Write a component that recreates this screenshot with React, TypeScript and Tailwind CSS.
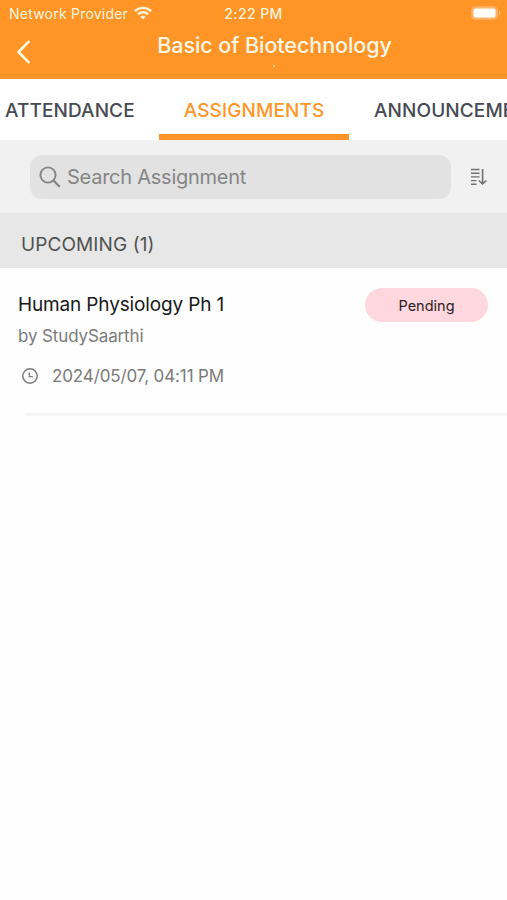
interface Assignment {
  id: number;
  title: string;
  author: string;
  dueDate: string;
  status: string;
}

const assignments: Assignment[] = [
  {
    id: 1,
    title: 'Human Physiology Ph 1',
    author: 'StudySaarthi',
    dueDate: '2024/05/07, 04:11 PM',
    status: 'Pending',
  },
];

const StatusBar = () => (
  <div className="grid h-7 grid-cols-3 items-center pb-[2px] text-[14px] text-[#fff3dc]">
    <div className="flex items-center gap-[6px] pl-[9px]">
      <span className="whitespace-nowrap tracking-[0.22px]">Network Provider</span>
      <svg className="h-[14px] w-[18px] shrink-0" viewBox="0 0 18 14" fill="none" stroke="currentColor" strokeWidth="2.4">
        <path d="M0.9 5.2C5.4 0.8 12.6 0.8 17.1 5.2" />
        <path d="M3.9 8.3C6.8 5.6 11.2 5.6 14.1 8.3" />
        <path d="M9 13.6L6.2 10.8C7.8 9.4 10.2 9.4 11.8 10.8Z" fill="currentColor" stroke="none" />
      </svg>
    </div>
    <span className="text-center font-medium tracking-[0.4px]">2:22 PM</span>
    <div className="flex justify-end pr-[6px]">
      <svg className="h-[14px] w-[30px]" viewBox="0 0 30 14">
        <rect x="0.5" y="0.5" width="26" height="13" rx="4" fill="#ffb366" stroke="#ffae5c" />
        <rect x="2.5" y="2.5" width="22" height="9" rx="2" fill="#fffefa" />
        <path d="M28 4.5C29.8 5.5 29.8 8.5 28 9.5Z" fill="#ffc283" />
      </svg>
    </div>
  </div>
);

const Header = () => (
  <header className="h-[79px] bg-[#ff9527]">
    <StatusBar />
    <div className="flex h-[51px]">
      <button className="flex w-10 shrink-0 justify-center pt-3 pl-2 text-[#fff6e6]" aria-label="Go back">
        <svg className="h-6 w-4" viewBox="0 0 16 24" fill="none" stroke="currentColor" strokeWidth="2.6" strokeLinecap="round" strokeLinejoin="round">
          <path d="M12.5 1.8L2.5 12L12.5 22.2" />
        </svg>
      </button>
      <div className="flex flex-1 flex-col items-center pt-1 pl-[2px] text-[#fff6e6]">
        <h1 className="text-[21.5px] leading-[26px] font-medium tracking-[-0.06px] whitespace-nowrap">Basic of Biotechnology</h1>
        <span className="mt-[7px] ml-[-2px] size-[2px] rounded-full bg-[#ffe6c4]" />
      </div>
    </div>
  </header>
);

const Tabs = () => (
  <nav className="flex h-[61px] overflow-hidden bg-white text-[19px] font-medium tracking-[0.1px] whitespace-nowrap text-[#464a52]">
    <button className="flex w-[159px] shrink-0 items-start pt-[18px] pl-[5px] leading-[28px]">ATTENDANCE</button>
    <button className="flex w-[190px] shrink-0 items-start justify-center border-b-6 border-[#ff9527] pt-[18px] leading-[28px] text-[#ff9527]">
      ASSIGNMENTS
    </button>
    <button className="flex shrink-0 items-start pt-[18px] pl-[25px] leading-[28px]">ANNOUNCEMENTS</button>
  </nav>
);

const SearchBar = () => (
  <div className="flex h-[73px] items-center bg-[#f1f1f1] pl-[30px]">
    <div className="flex h-11 w-[421px] items-center rounded-[12px] bg-[#e2e2e2] pl-[9px] text-[#858585]">
      <svg className="size-[22px]" viewBox="0 0 22 22" fill="none" stroke="currentColor" strokeWidth="1.9" strokeLinecap="round">
        <circle cx="9" cy="9" r="7.6" />
        <path d="M14.6 14.6L20.2 20.2" strokeWidth="2.2" />
      </svg>
      <span className="ml-[6px] text-[20px] tracking-[-0.25px] whitespace-nowrap">Search Assignment</span>
    </div>
    <button className="ml-[19px] text-[#707070]" aria-label="Sort">
      <svg className="h-[18px] w-[17px]" viewBox="0 0 17 18" fill="none" stroke="currentColor" strokeWidth="1.4">
        <path d="M1 1.5H9.5M1 5.2H9.5M1 8.9H9.5M1 12.6H6.5M1 16.3H6.5" />
        <path d="M12.6 1V16M8.8 12.5L12.6 16L16.4 12.5" strokeWidth="1.6" />
      </svg>
    </button>
  </div>
);

const AssignmentRow = ({ assignment }: { assignment: Assignment }) => (
  <li className="h-[148px]">
    <div className="flex h-[145px] justify-between pr-[19px] pl-[18px]">
      <div className="pt-[23px]">
        <h3 className="text-[19px] leading-[28px] tracking-[-0.15px] whitespace-nowrap text-[#181818]">{assignment.title}</h3>
        <p className="mt-[3px] text-[17px] leading-[28px] tracking-[-0.13px] text-[#7b7b7b]">by {assignment.author}</p>
        <div className="mt-[12px] flex items-center pl-[4px] text-[#7b7b7b]">
          <svg className="size-4" viewBox="0 0 16 16" fill="none" stroke="currentColor" strokeWidth="1.5">
            <circle cx="8" cy="8" r="7.2" />
            <path d="M7.3 4.5V8.6H11" strokeWidth="1.3" />
          </svg>
          <span className="ml-[14px] text-[17px] leading-[28px] tracking-[-0.12px] whitespace-nowrap">{assignment.dueDate}</span>
        </div>
      </div>
      <span className="mt-5 flex h-[34px] w-[123px] items-center justify-center rounded-full bg-[#ffd8df] pt-[2px] text-[14.5px] text-[#2c2023]">
        {assignment.status}
      </span>
    </div>
    <div className="ml-[25px] h-[3px] bg-[#f5f5f5]" />
  </li>
);

export default function App() {
  return (
    <div className="h-[900px] w-[507px] overflow-hidden bg-[#fefefe] font-['Inter',sans-serif]">
      <Header />
      <Tabs />
      <SearchBar />
      <h2 className="flex h-[55px] items-center bg-[#e7e7e7] pt-[9px] pl-[21px] text-[19px] tracking-[0.1px] text-[#515151]">
        UPCOMING ({assignments.length})
      </h2>
      <ul>
        {assignments.map((assignment) => (
          <AssignmentRow key={assignment.id} assignment={assignment} />
        ))}
      </ul>
    </div>
  );
}
